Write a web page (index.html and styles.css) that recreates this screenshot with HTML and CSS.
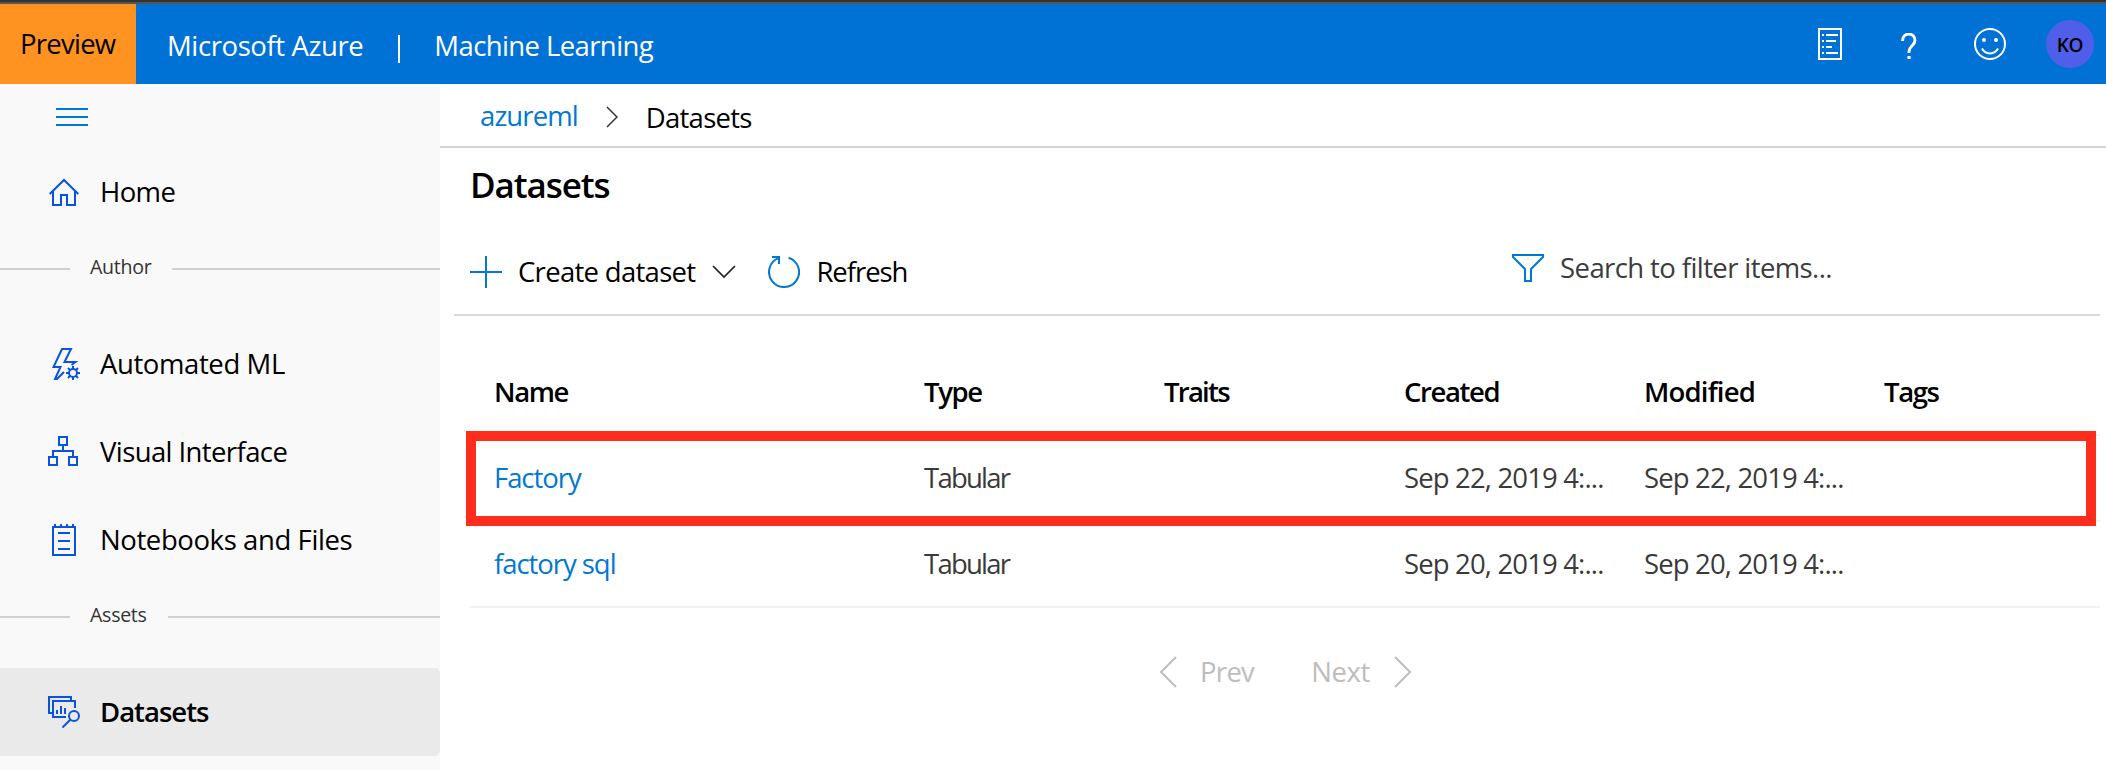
FILE: index.html
```html
<!DOCTYPE html>
<html lang="en">
<head>
<meta charset="utf-8">
<title>Datasets - Machine Learning</title>
<link rel="stylesheet" href="styles.css">
</head>
<body>
<header class="topbar">
  <div class="preview">Preview</div>
  <div class="brand"><span>Microsoft Azure</span><span class="brand-sep"></span><span class="brand-product">Machine Learning</span></div>
  <div class="top-actions">
    <svg class="ic-notes" width="24" height="32" viewBox="0 0 24 32" fill="none" stroke="#fff" stroke-width="2"><path d="M1 1h22v30H1zM4 7h2M8 7h12M4 13h2M8 13h10M4 19h2M8 19h6M4 25h2M8 25h12"/></svg>
    <svg class="ic-help" width="16" height="26" viewBox="0 0 16 26" fill="none" stroke="#fff" stroke-width="2.900"><path d="M1.600 8V7.200A6 6 0 0 1 14 7.200C14 12.500 8 13 8 18.500V20"/><path d="M8 23v3" stroke-width="3.200"/></svg>
    <svg class="ic-smile" width="32" height="32" viewBox="0 0 32 32" fill="none" stroke="#fff" stroke-width="2"><circle cx="16" cy="16" r="15"/><path d="M8 20.500a9 9 0 0 0 16 0"/><circle cx="10" cy="12" r="2" fill="#fff" stroke="none"/><circle cx="22" cy="12" r="2" fill="#fff" stroke="none"/></svg>
    <div class="avatar">KO</div>
  </div>
</header>
<div class="shell">
  <nav class="sidebar">
    <div class="burger"><i></i><i></i><i></i></div>
    <a class="nav-item home"><svg class="nav-icon" width="32" height="32" viewBox="0 0 32 32" fill="none" stroke="#0a53de" stroke-width="2"><path d="M1.700 18 16 4l14.300 14M5 15v14h8V19h6v10h8V15"/></svg><span>Home</span></a>
    <div class="group"><span>Author</span></div>
    <a class="nav-item"><svg class="nav-icon" width="32" height="32" viewBox="0 0 32 32" fill="none" stroke="#0a53de" stroke-width="2"><path d="M23.500 17l4-3H16.500L23 1h-9L5.500 19h7L7 31h2l7-7"/><circle cx="25" cy="25" r="4"/><path d="M25 18v3M25 29v3M18 25h3M29 25h3M20 20l2.200 2.200M27.800 27.800 30 30M20 30l2.200-2.200M27.800 22.200 30 20"/></svg><span>Automated ML</span></a>
    <a class="nav-item visual"><svg class="nav-icon" width="32" height="32" viewBox="0 0 32 32" fill="none" stroke="#0a53de" stroke-width="2"><path d="M11 1h8v8h-8zM1 21h8v8H1zM21 21h8v8h-8zM15 9v6M5 21v-6h20v6"/></svg><span>Visual Interface</span></a>
    <a class="nav-item"><svg class="nav-icon" width="32" height="32" viewBox="0 0 32 32" fill="none" stroke="#0a53de" stroke-width="2"><path d="M5 3h22v28H5zM7 0v3M13 0v3M19 0v3M25 0v3M10 9h12M10 17h12M10 25h12"/></svg><span>Notebooks and Files</span></a>
    <div class="group"><span>Assets</span></div>
    <a class="nav-item active"><svg class="nav-icon" width="32" height="32" viewBox="0 0 32 32" fill="none" stroke="#0a53de" stroke-width="2"><path d="M4 17H1V1h22v4M18 21H5V5h22v7M9 18v-4M13 18v-8M17 18v-6M22.500 23.500 14.500 31.500"/><circle cx="26" cy="20" r="5"/></svg><span>Datasets</span></a>
  </nav>
  <main class="main">
    <div class="crumbs"><a class="crumb-link">azureml</a><svg class="crumb-chev" width="12" height="22" viewBox="0 0 12 22" fill="none" stroke="#333" stroke-width="1.500"><path d="M1 1l10 10L1 21"/></svg><span class="crumb-now">Datasets</span></div>
    <h1 class="title">Datasets</h1>
    <div class="toolbar">
      <svg class="ic-plus" width="32" height="32" viewBox="0 0 32 32" fill="none" stroke="#0078d4" stroke-width="2"><path d="M16 0v32M0 16h32"/></svg>
      <span class="create">Create dataset</span>
      <svg class="ic-down" width="24" height="14" viewBox="0 0 24 14" fill="none" stroke="#222" stroke-width="1.700"><path d="M1 1l11 11L23 1"/></svg>
      <svg class="ic-refresh" width="32" height="32" viewBox="0 0 32 32" fill="none" stroke="#0078d4" stroke-width="2"><path d="M20.500 1.700A15 15 0 1 1 11 1.900M4 1h7v7"/></svg>
      <span class="refresh">Refresh</span>
      <div class="search"><svg width="32" height="28" viewBox="0 0 32 28" fill="none" stroke="#0078d4" stroke-width="2"><path d="M1 1h30v2L19 15v12h-6V15L1 3z"/></svg><span>Search to filter items...</span></div>
    </div>
    <section class="table">
      <div class="row head"><span>Name</span><span>Type</span><span class="tight">Traits</span><span>Created</span><span class="loose">Modified</span><span>Tags</span></div>
      <div class="row marked"><a>Factory</a><span class="tight">Tabular</span><span></span><span class="date">Sep 22, 2019 4:...</span><span class="date">Sep 22, 2019 4:...</span><span></span></div>
      <div class="row"><a>factory sql</a><span class="tight">Tabular</span><span></span><span class="date">Sep 20, 2019 4:...</span><span class="date">Sep 20, 2019 4:...</span><span></span></div>
    </section>
    <div class="pager">
      <svg width="18" height="32" viewBox="0 0 18 32" fill="none" stroke="#bdbdbd" stroke-width="2"><path d="M17 1 2 16l15 15"/></svg>
      <span class="prev">Prev</span><span class="next">Next</span>
      <svg width="18" height="32" viewBox="0 0 18 32" fill="none" stroke="#bdbdbd" stroke-width="2"><path d="M1 1l15 15L1 31"/></svg>
    </div>
  </main>
</div>
</body>
</html>
```
FILE: styles.css
```css
*, ::before, ::after { box-sizing: border-box; }
body {
  margin: 0;
  height: 770px;
  overflow: hidden;
  background: #fff;
  color: #000;
  font: 27.5px/36px "Open Sans", "Noto Sans", sans-serif;
  letter-spacing: -0.4px;
  white-space: nowrap;
}
svg { display: block; flex: none; }

.topbar {
  display: flex;
  height: 84px;
  border-top: 2px solid #333;
  background: linear-gradient(#555 2px, #0072d6 2px);
  color: #fff;
}
.preview {
  width: 136px;
  margin-top: 2px;
  padding: 22px 0 0 20px;
  background: #ff9321;
  color: #000;
  letter-spacing: -0.75px;
}
.brand { display: flex; padding: 26px 0 0 31px; }
.brand-sep { width: 2px; height: 28px; margin: 7px 34px 0 35px; background: #fff; }
.brand-product { letter-spacing: -0.6px; }
.top-actions { display: flex; margin-left: auto; padding-right: 12px; }
.ic-notes { margin: 26px 59px 0 0; }
.ic-help { margin: 31px 57px 0 0; }
.ic-smile { margin: 26px 40px 0 0; }
.avatar {
  width: 48px;
  height: 48px;
  margin-top: 18px;
  border-radius: 50%;
  background: #4f5fea;
  color: #000;
  font-size: 19px;
  font-weight: 600;
  line-height: 50px;
  text-align: center;
}

.shell { display: flex; height: 686px; }
.sidebar { width: 440px; background: #f9f9f9; }
.burger {
  display: flex;
  flex-direction: column;
  gap: 6px;
  width: 32px;
  height: 40px;
  margin: 24px 0 0 56px;
}
.burger i { height: 2px; background: #0078d4; }
.nav-item {
  display: flex;
  align-items: center;
  gap: 20px;
  height: 88px;
  padding-left: 48px;
}
.home, .visual { letter-spacing: -0.6px; }
.active {
  border-radius: 0 5px 5px 0;
  background: #eaeaea;
  font-weight: 600;
  letter-spacing: -1px;
}
.group {
  display: flex;
  align-items: center;
  height: 84px;
  padding-bottom: 18px;
  font-size: 19.6px;
  letter-spacing: -0.3px;
  color: #333;
}
.group::before, .group::after { content: ""; height: 2px; background: #d0d0d0; }
.group::before { width: 70px; }
.group::after { flex: 1; }
.group span { margin: -4px 21px 0 20px; }

.main { flex: 1; }
.crumbs {
  display: flex;
  height: 64px;
  padding-left: 40px;
  border-bottom: 2px solid #d4d4d4;
}
.crumb-link { margin-top: 14px; color: #0078d4; letter-spacing: -0.9px; }
.crumb-chev { margin: 22px 28px 0 28px; }
.crumb-now { margin-top: 16px; letter-spacing: -0.75px; }
.title {
  height: 82px;
  margin: 0;
  padding: 13px 0 0 30px;
  font-size: 35px;
  font-weight: 600;
  line-height: 48px;
  letter-spacing: -1.1px;
}
.toolbar {
  display: flex;
  align-items: center;
  height: 86px;
  margin: 0 6px 0 14px;
  padding-left: 16px;
  border-bottom: 2px solid #d9d9d9;
}
.ic-plus { margin-right: 16px; }
.create { letter-spacing: -0.7px; }
.ic-down { margin-left: 17px; }
.ic-refresh { margin: 0 16px 0 32px; }
.refresh { letter-spacing: -1.05px; }
.search {
  display: flex;
  align-items: center;
  gap: 16px;
  margin: -8px 268px 0 auto;
  color: #3c3c3c;
  letter-spacing: -0.6px;
}

.table { margin: 32px 6px 0 30px; color: #3a3a3a; }
.row {
  position: relative;
  display: grid;
  grid-template-columns: 430px 240px 240px 240px 240px 1fr;
  align-items: center;
  height: 86px;
  padding-left: 24px;
  border-bottom: 2px solid #f2f2f2;
}
.row a { color: #0078d4; letter-spacing: -1.05px; }
.head {
  height: 88px;
  padding-top: 2px;
  color: #000;
  font-weight: 600;
  letter-spacing: -1.4px;
}
.tight { letter-spacing: -1.75px; }
.loose { letter-spacing: -0.8px; }
.date { letter-spacing: -0.85px; }
.marked::after {
  content: "";
  position: absolute;
  inset: -5px 4px auto -4px;
  height: 95px;
  border: 10px solid #ff2d1b;
}
.pager {
  display: flex;
  align-items: center;
  margin: 46px 0 0 719px;
  color: #bdbdbd;
}
.prev { margin: 0 57px 0 23px; letter-spacing: -0.7px; }
.next { margin-right: 24px; }
```
